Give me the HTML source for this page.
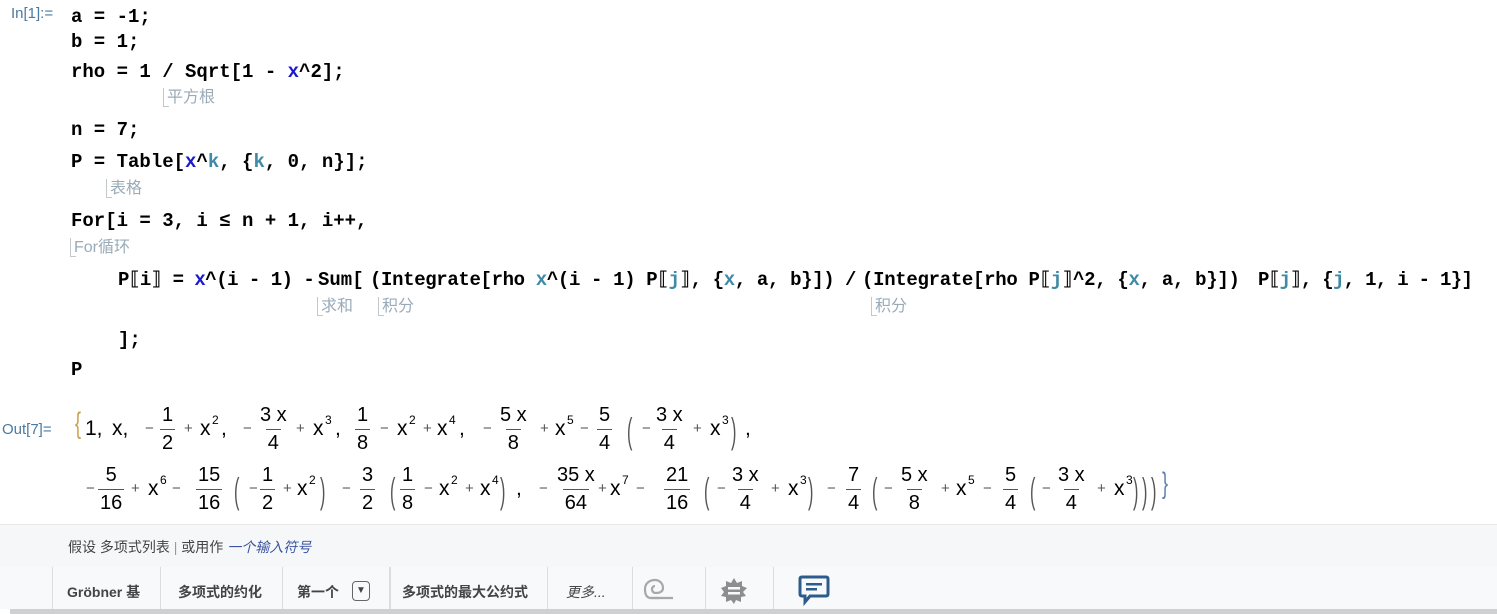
<!DOCTYPE html>
<html><head><meta charset="utf-8"><style>
body{margin:0;width:1497px;height:614px;background:#fff;position:relative;overflow:hidden;font-family:"Liberation Sans","Noto Sans CJK SC",sans-serif}
.c{position:absolute;font-family:"Liberation Mono","Noto Sans CJK SC",monospace;font-weight:bold;font-size:19px;color:#000;white-space:pre;line-height:24px}
.b{color:#1a1acc}.t{color:#3f8aa6}
.tip{position:absolute;font-size:16px;color:#9aabb8;line-height:20px;padding-left:3px;border-left:1px solid #c0c8cc;height:19px}
.tip::after{content:"";position:absolute;left:0;bottom:0;width:5px;height:1px;background:#c0c8cc}
.lbl{position:absolute;font-size:15px;color:#4a7aa0}
.row{position:absolute;left:0;width:1400px;height:0}
.m{position:absolute;top:-14px;font-size:21px;line-height:24px;color:#000;white-space:pre}
.s{position:absolute;top:-18px;font-size:12px;color:#000}
.o{position:absolute;top:-11px;font-size:15px;color:#555}
.f{position:absolute;top:-29px;display:flex;flex-direction:column;align-items:center;font-size:20px;line-height:27px;color:#000}
.f i{font-style:normal;display:block;padding:0 2px}
.f i+i{border-top:1px solid #555;line-height:27px}
.p{position:absolute;top:-20px;font-size:36px;line-height:40px;color:#555;transform:scaleX(.45);transform-origin:left}
</style></head><body>
<div class="lbl" style="left:11px;top:5px">In[1]:=</div>
<div class="c" style="left:71px;top:5px">a = -1;</div>
<div class="c" style="left:71px;top:30px">b = 1;</div>
<div class="c" style="left:71px;top:60px">rho = 1 / Sqrt[1 - <span class="b">x</span>^2];</div>
<div class="tip" style="left:163px;top:88px">平方根</div>
<div class="c" style="left:71px;top:118px">n = 7;</div>
<div class="c" style="left:71px;top:150px">P = Table[<span class="b">x</span>^<span class="t">k</span>, {<span class="t">k</span>, 0, n}];</div>
<div class="tip" style="left:106px;top:179px">表格</div>
<div class="c" style="left:71px;top:209px">For[i = 3, i ≤ n + 1, i++,</div>
<div class="tip" style="left:70px;top:238px">For循环</div>
<div class="c" style="left:118px;top:268px;letter-spacing:-0.5px">P⟦i⟧ = <span class="b">x</span>^(i - 1) -</div>
<div class="c" style="left:318px;top:268px">Sum[</div>
<div class="c" style="left:370px;top:268px;letter-spacing:-0.35px">(Integrate[rho <span class="t">x</span>^(i - 1) P⟦<span class="t">j</span>⟧, {<span class="t">x</span>, a, b}])</div>
<div class="c" style="left:845px;top:268px">/</div>
<div class="c" style="left:862px;top:268px;letter-spacing:-0.3px">(Integrate[rho P⟦<span class="t">j</span>⟧^2, {<span class="t">x</span>, a, b}])</div>
<div class="c" style="left:1258px;top:268px;letter-spacing:-0.7px">P⟦<span class="t">j</span>⟧, {<span class="t">j</span>, 1, i - 1}]</div>
<div class="tip" style="left:317px;top:297px">求和</div>
<div class="tip" style="left:378px;top:297px">积分</div>
<div class="tip" style="left:871px;top:297px">积分</div>
<div class="c" style="left:118px;top:328px">];</div>
<div class="c" style="left:71px;top:358px">P</div>

<div class="lbl" style="left:2px;top:421px">Out[7]=</div>
<div class="row" style="top:431px">
<span class="m" style="left:73px;top:-19px;font-size:30px;color:#c9a050;transform:scaleX(.6)">{</span>
<span class="m" style="left:85px">1,</span><span class="m" style="left:112px">x,</span>
<span class="o" style="left:145px">−</span><span class="f" style="left:160px"><i>1</i><i>2</i></span>
<span class="o" style="left:184px">+</span><span class="m" style="left:200px">x</span><span class="s" style="left:212px">2</span><span class="m" style="left:221px">,</span>
<span class="o" style="left:243px">−</span><span class="f" style="left:258px"><i>3 x</i><i>4</i></span>
<span class="o" style="left:296px">+</span><span class="m" style="left:313px">x</span><span class="s" style="left:325px">3</span><span class="m" style="left:335px">,</span>
<span class="f" style="left:355px"><i>1</i><i>8</i></span>
<span class="o" style="left:380px">−</span><span class="m" style="left:397px">x</span><span class="s" style="left:409px">2</span>
<span class="o" style="left:423px">+</span><span class="m" style="left:437px">x</span><span class="s" style="left:449px">4</span><span class="m" style="left:459px">,</span>
<span class="o" style="left:483px">−</span><span class="f" style="left:498px"><i>5 x</i><i>8</i></span>
<span class="o" style="left:540px">+</span><span class="m" style="left:555px">x</span><span class="s" style="left:567px">5</span>
<span class="o" style="left:580px">−</span><span class="f" style="left:597px"><i>5</i><i>4</i></span>
<span class="p" style="left:627px">(</span><span class="o" style="left:642px">−</span><span class="f" style="left:654px"><i>3 x</i><i>4</i></span>
<span class="o" style="left:693px">+</span><span class="m" style="left:710px">x</span><span class="s" style="left:722px">3</span><span class="p" style="left:731px">)</span><span class="m" style="left:745px">,</span>
</div>
<div class="row" style="top:491px">
<span class="o" style="left:86px">−</span><span class="f" style="left:98px"><i>5</i><i>16</i></span>
<span class="o" style="left:131px">+</span><span class="m" style="left:148px">x</span><span class="s" style="left:160px">6</span>
<span class="o" style="left:172px">−</span><span class="f" style="left:196px"><i>15</i><i>16</i></span>
<span class="p" style="left:234px">(</span><span class="o" style="left:249px">−</span><span class="f" style="left:260px"><i>1</i><i>2</i></span>
<span class="o" style="left:283px">+</span><span class="m" style="left:297px">x</span><span class="s" style="left:309px">2</span><span class="p" style="left:320px">)</span>
<span class="o" style="left:342px">−</span><span class="f" style="left:360px"><i>3</i><i>2</i></span>
<span class="p" style="left:390px">(</span><span class="f" style="left:400px"><i>1</i><i>8</i></span>
<span class="o" style="left:424px">−</span><span class="m" style="left:439px">x</span><span class="s" style="left:451px">2</span>
<span class="o" style="left:465px">+</span><span class="m" style="left:480px">x</span><span class="s" style="left:492px">4</span><span class="p" style="left:500px">)</span><span class="m" style="left:516px">,</span>
<span class="o" style="left:539px">−</span><span class="f" style="left:555px"><i>35 x</i><i>64</i></span>
<span class="o" style="left:598px">+</span><span class="m" style="left:610px">x</span><span class="s" style="left:622px">7</span>
<span class="o" style="left:636px">−</span><span class="f" style="left:664px"><i>21</i><i>16</i></span>
<span class="p" style="left:704px">(</span><span class="o" style="left:717px">−</span><span class="f" style="left:730px"><i>3 x</i><i>4</i></span>
<span class="o" style="left:771px">+</span><span class="m" style="left:788px">x</span><span class="s" style="left:800px">3</span><span class="p" style="left:808px">)</span>
<span class="o" style="left:827px">−</span><span class="f" style="left:846px"><i>7</i><i>4</i></span>
<span class="p" style="left:872px">(</span><span class="o" style="left:884px">−</span><span class="f" style="left:899px"><i>5 x</i><i>8</i></span>
<span class="o" style="left:941px">+</span><span class="m" style="left:956px">x</span><span class="s" style="left:968px">5</span>
<span class="o" style="left:983px">−</span><span class="f" style="left:1003px"><i>5</i><i>4</i></span>
<span class="p" style="left:1030px">(</span><span class="o" style="left:1042px">−</span><span class="f" style="left:1056px"><i>3 x</i><i>4</i></span>
<span class="o" style="left:1097px">+</span><span class="m" style="left:1114px">x</span><span class="s" style="left:1126px">3</span>
<span class="p" style="left:1133px">)</span><span class="p" style="left:1142px">)</span><span class="p" style="left:1151px">)</span>
<span class="m" style="left:1160px;top:-19px;font-size:30px;color:#5a80b0;transform:scaleX(.6)">}</span>
</div>

<div style="position:absolute;left:0;top:524px;width:1497px;height:42px;background:#f6f7f9;border-top:1px solid #e6e8ea;border-bottom:1px solid #dfe1e3"></div>
<div style="position:absolute;left:68px;top:537px;font-size:14px;color:#444">假设 多项式列表 <span style="color:#999">|</span> 或用作 <i style="color:#3a55a0">一个输入符号</i></div>
<div style="position:absolute;left:0;top:567px;width:1497px;height:42px;background:#f8f9fa"></div>
<div style="position:absolute;left:10px;top:609px;width:1487px;height:5px;background:#cfd0d2"></div>
<div style="position:absolute;top:567px;left:52px;width:1px;height:42px;background:#dcdde0"></div>
<div style="position:absolute;top:567px;left:160px;width:1px;height:42px;background:#dcdde0"></div>
<div style="position:absolute;top:567px;left:282px;width:1px;height:42px;background:#dcdde0"></div>
<div style="position:absolute;top:567px;left:389px;width:2px;height:42px;background:#dcdde0"></div>
<div style="position:absolute;top:567px;left:547px;width:1px;height:42px;background:#dcdde0"></div>
<div style="position:absolute;top:567px;left:632px;width:1px;height:42px;background:#dcdde0"></div>
<div style="position:absolute;top:567px;left:705px;width:1px;height:42px;background:#dcdde0"></div>
<div style="position:absolute;top:567px;left:773px;width:1px;height:42px;background:#dcdde0"></div>
<div style="position:absolute;top:582px;left:67px;font-size:14px;font-weight:bold;color:#444">Gröbner 基</div>
<div style="position:absolute;top:582px;left:178px;font-size:14px;font-weight:bold;color:#444">多项式的约化</div>
<div style="position:absolute;top:582px;left:297px;font-size:14px;font-weight:bold;color:#444">第一个</div>
<div style="position:absolute;top:581px;left:352px;width:16px;height:18px;border:1px solid #666;border-radius:4px;font-size:10px;text-align:center;line-height:18px;color:#444">▼</div>
<div style="position:absolute;top:582px;left:402px;font-size:14px;font-weight:bold;color:#444">多项式的最大公约式</div>
<div style="position:absolute;top:582px;left:566px;font-size:14px;font-style:italic;color:#444">更多...</div>
<svg style="position:absolute;left:643px;top:577px" width="32" height="26" viewBox="0 0 32 26"><path d="M16 21 H8 C3 21 2 16 2 12 C2 6 7 3 12 3 C17 3 20 7 20 11 C20 15 16 16 13 16 C10 16 9 14 9 12 C9 10 11 9 12 9" fill="none" stroke="#a8a8a8" stroke-width="2.2"/><path d="M8 21 H30" stroke="#a8a8a8" stroke-width="2.2"/></svg>
<svg style="position:absolute;left:720px;top:577px" width="28" height="28" viewBox="0 0 28 28"><polygon points="14,1 17,6 22,4 22,9 27,11 23,15 26,19 21,20 21,25 16,23 14,27 11,23 6,25 6,20 1,19 4,15 1,11 6,9 6,4 11,6" fill="#8e8e8e"/><rect x="8" y="10" width="12" height="2.5" fill="#f8f9fa"/><rect x="8" y="15" width="12" height="2.5" fill="#f8f9fa"/></svg>
<svg style="position:absolute;left:798px;top:575px" width="32" height="32" viewBox="0 0 32 32"><path d="M4 2 H28 Q30 2 30 4 V19 Q30 21 28 21 H12 L7 27 V21 H4 Q2 21 2 19 V4 Q2 2 4 2 Z" fill="none" stroke="#2d5b8c" stroke-width="3"/><rect x="8" y="8" width="16" height="2.5" fill="#2d5b8c"/><rect x="8" y="13" width="11" height="2.5" fill="#2d5b8c"/></svg>
</body></html>
